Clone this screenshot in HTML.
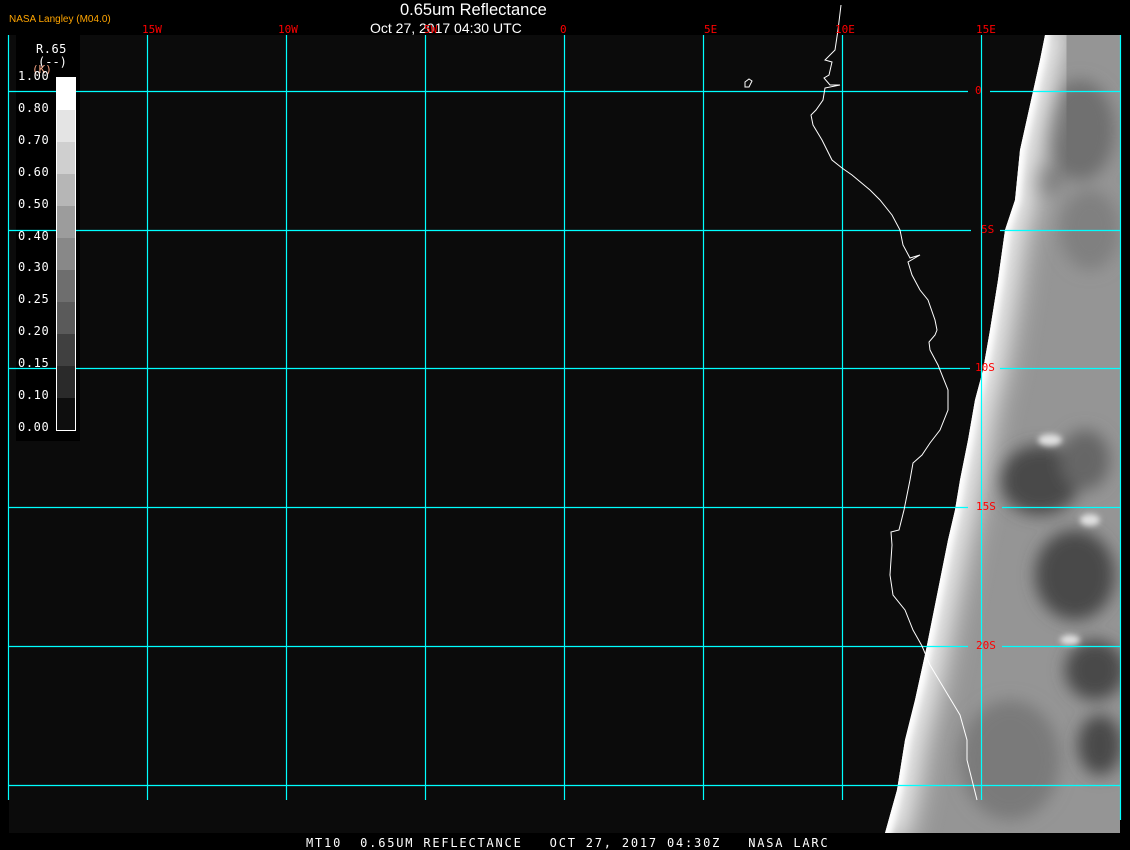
<!DOCTYPE html>
<html><head><meta charset="utf-8"><style>
html,body{margin:0;padding:0;background:#000;}
body{width:1130px;height:850px;position:relative;overflow:hidden;font-family:"Liberation Sans",sans-serif;}
.t{position:absolute;white-space:nowrap;line-height:1;}
.m{font-family:"DejaVu Sans Mono","Liberation Mono",monospace;}
</style></head><body>
<svg width="1130" height="850" style="position:absolute;left:0;top:0" xmlns="http://www.w3.org/2000/svg">
<defs>
<filter id="bl"><feGaussianBlur stdDeviation="8"/></filter>
<filter id="bl3"><feGaussianBlur stdDeviation="14"/></filter>
<filter id="bl2"><feGaussianBlur stdDeviation="3"/></filter>
<clipPath id="cc"><polygon points="1045,35 1120,35 1120,833 885,833 897,790 905,740 915,700 926,650 932,620 940,580 948,540 955,510 960,480 968,440 975,400 983,370 990,330 998,280 1005,230 1015,200 1020,150 1040,60"/></clipPath>
</defs>
<rect x="9" y="35" width="1111" height="798" fill="#0b0b0b"/>
<rect x="16" y="35" width="64" height="406" fill="#000"/>
<g clip-path="url(#cc)">
<rect x="880" y="35" width="245" height="800" fill="#959595"/>
<g filter="url(#bl)" fill="#707070">
<ellipse cx="1080" cy="130" rx="35" ry="50"/>
<ellipse cx="1090" cy="230" rx="30" ry="40" fill="#808080"/>
<ellipse cx="1040" cy="180" rx="20" ry="15"/>
<ellipse cx="1010" cy="760" rx="50" ry="60" fill="#7a7a7a"/>
</g>
<g filter="url(#bl)" fill="#4a4a4a">
<ellipse cx="1040" cy="480" rx="40" ry="35"/>
<ellipse cx="1085" cy="460" rx="25" ry="30" fill="#666"/>
<ellipse cx="1075" cy="575" rx="40" ry="45"/>
<ellipse cx="1095" cy="670" rx="30" ry="30"/>
<ellipse cx="1100" cy="745" rx="22" ry="30"/>
</g>
<polyline filter="url(#bl3)" fill="none" stroke="#f2f2f2" stroke-width="40" points="1050,20 1040,60 1020,150 1015,200 1005,230 998,280 990,330 983,370 975,400 968,440 960,480 955,510 948,540 940,580 932,620 926,650 920,680 915,700 905,740 897,790 885,840"/>
<polyline filter="url(#bl2)" fill="none" stroke="#fff" stroke-width="10" points="1047,20 1040,60 1020,150 1015,200 1005,230 998,280 990,330 983,370 975,400 968,440 960,480 955,510 948,540 940,580 932,620 926,650 920,680 915,700 905,740 897,790 885,840"/>
<g filter="url(#bl2)" fill="#e0e0e0">
<ellipse cx="1050" cy="440" rx="12" ry="6"/>
<ellipse cx="1090" cy="520" rx="10" ry="6"/>
<ellipse cx="1070" cy="640" rx="10" ry="5"/>
</g>
</g>
<g stroke="#00ffff" stroke-width="1.2" fill="none">
<line x1="8.5" y1="35" x2="8.5" y2="800"/>
<line x1="147.5" y1="35" x2="147.5" y2="800"/>
<line x1="286.5" y1="35" x2="286.5" y2="800"/>
<line x1="425.5" y1="35" x2="425.5" y2="800"/>
<line x1="564.5" y1="35" x2="564.5" y2="800"/>
<line x1="703.5" y1="35" x2="703.5" y2="800"/>
<line x1="842.5" y1="35" x2="842.5" y2="800"/>
<line x1="981.5" y1="35" x2="981.5" y2="800"/>
<line x1="1120.5" y1="35" x2="1120.5" y2="820"/>
<polyline points="8,91.5 968,91.5"/><line x1="990" y1="91.5" x2="1120" y2="91.5"/>
<polyline points="8,230.5 971,230.5"/><line x1="1000" y1="230.5" x2="1120" y2="230.5"/>
<polyline points="8,368.5 970,368.5"/><line x1="1000" y1="368.5" x2="1120" y2="368.5"/>
<polyline points="8,507.5 968,507.5"/><line x1="1002" y1="507.5" x2="1120" y2="507.5"/>
<polyline points="8,646.5 968,646.5"/><line x1="1002" y1="646.5" x2="1120" y2="646.5"/>
<line x1="8" y1="785.5" x2="1120" y2="785.5"/>
</g>
<g fill="none" stroke="#fff" stroke-width="1">
<polyline points="841,5 838,30 835,50 825,60 832,62 829,75 824,78 830,85 840,85 825,88 823,100 816,110 811,115 813,125 822,140 832,160 842,168 852,175 870,190 880,200 892,215 900,230 903,245 910,258 920,255 908,262 912,275 920,290 928,300 935,320 937,330 935,335 929,342 930,350 938,365 948,390 948,410 940,430 930,443 922,455 913,463 910,480 904,510 899,530 891,532 892,545 890,575 893,595 905,610 913,630 922,646 930,665 945,690 960,715 967,740 967,760 972,780 977,800"/>
<path d="M745,82 l4,-3 3,2 -3,6 -4,0 z"/>
</g>
<rect x="56.5" y="77.5" width="19" height="353" fill="#0e0e0e" stroke="#fff"/>
<g>
<rect x="57" y="78" width="18" height="32" fill="#fff"/>
<rect x="57" y="110" width="18" height="32" fill="#e4e4e4"/>
<rect x="57" y="142" width="18" height="32" fill="#cfcfcf"/>
<rect x="57" y="174" width="18" height="32" fill="#b6b6b6"/>
<rect x="57" y="206" width="18" height="32" fill="#9c9c9c"/>
<rect x="57" y="238" width="18" height="32" fill="#888"/>
<rect x="57" y="270" width="18" height="32" fill="#6e6e6e"/>
<rect x="57" y="302" width="18" height="32" fill="#5a5a5a"/>
<rect x="57" y="334" width="18" height="32" fill="#404040"/>
<rect x="57" y="366" width="18" height="32" fill="#2a2a2a"/>
</g>
</svg>
<div class="t" style="left:9px;top:15px;font-size:10px;color:#ffa500">NASA Langley (M04.0)</div>
<div class="t" style="left:400px;top:2px;font-size:16.5px;color:#fff">0.65um Reflectance</div>
<div class="t" style="left:370px;top:21px;font-size:14px;color:#fff">Oct 27, 2017 04:30 UTC</div>
<div class="m t" style="font-size:11px;color:#f00;left:142px;top:24px">15W</div>
<div class="m t" style="font-size:11px;color:#f00;left:278px;top:24px">10W</div>
<div class="m t" style="font-size:11px;color:#f00;left:424px;top:24px">5W</div>
<div class="m t" style="font-size:11px;color:#f00;left:560px;top:24px">0</div>
<div class="m t" style="font-size:11px;color:#f00;left:704px;top:24px">5E</div>
<div class="m t" style="font-size:11px;color:#f00;left:835px;top:24px">10E</div>
<div class="m t" style="font-size:11px;color:#f00;left:976px;top:24px">15E</div>
<div class="m t" style="font-size:11px;color:#f00;left:975px;top:85px">0</div>
<div class="m t" style="font-size:11px;color:#f00;left:981px;top:224px">5S</div>
<div class="m t" style="font-size:11px;color:#f00;left:975px;top:362px">10S</div>
<div class="m t" style="font-size:11px;color:#f00;left:976px;top:501px">15S</div>
<div class="m t" style="font-size:11px;color:#f00;left:976px;top:640px">20S</div>
<div class="m t" style="font-size:12px;color:#fff;left:36px;top:43px;letter-spacing:0.5px">R.65</div>
<div class="m t" style="font-size:12px;color:#fff;left:38px;top:56px">(--)</div>
<div class="m t" style="font-size:11px;color:#f0a080;left:32px;top:64px">(K)</div>
<div class="m t" style="font-size:12px;color:#fff;left:18px;line-height:31.9px;top:61px;letter-spacing:0.6px;white-space:pre">1.00
0.80
0.70
0.60
0.50
0.40
0.30
0.25
0.20
0.15
0.10
0.00</div>
<div class="m t" style="font-size:12px;color:#fff;left:306px;top:837px;letter-spacing:1.8px;white-space:pre">MT10  0.65UM REFLECTANCE   OCT 27, 2017 04:30Z   NASA LARC</div>
</body></html>
